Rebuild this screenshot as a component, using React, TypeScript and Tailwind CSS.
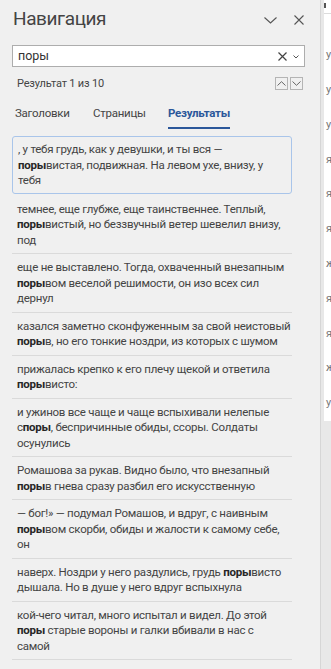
import React from "react";

type Item = { lines: React.ReactNode[]; selected?: boolean };

const B = ({ children }: { children: React.ReactNode }) => (
  <span className="font-bold text-[#262626]">{children}</span>
);

const items: Item[] = [
  {
    selected: true,
    lines: [
      <>, у тебя грудь, как у девушки, и ты вся —</>,
      <>
        <B>поры</B>вистая, подвижная. На левом ухе, внизу, у
      </>,
      <>тебя</>,
    ],
  },
  {
    lines: [
      <>темнее, еще глубже, еще таинственнее. Теплый,</>,
      <>
        <B>поры</B>вистый, но беззвучный ветер шевелил внизу,
      </>,
      <>под</>,
    ],
  },
  {
    lines: [
      <>еще не выставлено. Тогда, охваченный внезапным</>,
      <>
        <B>поры</B>вом веселой решимости, он изо всех сил
      </>,
      <>дернул</>,
    ],
  },
  {
    lines: [
      <>казался заметно сконфуженным за свой неистовый</>,
      <>
        <B>поры</B>в, но его тонкие ноздри, из которых с шумом
      </>,
    ],
  },
  {
    lines: [
      <>прижалась крепко к его плечу щекой и ответила</>,
      <>
        <B>поры</B>висто:
      </>,
    ],
  },
  {
    lines: [
      <>и ужинов все чаще и чаще вспыхивали нелепые</>,
      <>
        с<B>поры</B>, беспричинные обиды, ссоры. Солдаты
      </>,
      <>осунулись</>,
    ],
  },
  {
    lines: [
      <>Ромашова за рукав. Видно было, что внезапный</>,
      <>
        <B>поры</B>в гнева сразу разбил его искусственную
      </>,
    ],
  },
  {
    lines: [
      <>— бог!» — подумал Ромашов, и вдруг, с наивным</>,
      <>
        <B>поры</B>вом скорби, обиды и жалости к самому себе,
      </>,
      <>он</>,
    ],
  },
  {
    lines: [
      <>
        наверх. Ноздри у него раздулись, грудь <B>поры</B>висто
      </>,
      <>дышала. Но в душе у него вдруг вспыхнула</>,
    ],
  },
  {
    lines: [
      <>кой-чего читал, много испытал и видел. До этой</>,
      <>
        <B>поры</B> старые вороны и галки вбивали в нас с
      </>,
      <>самой</>,
    ],
  },
];

const pageGlyphs = ["у", "у", "у", "я", "я", "я", "ж", "я", "я", "ж", "у"];

export default function App() {
  return (
    <div
      className="w-[331px] h-[669px] flex bg-[#f0f0f0] overflow-hidden text-[#444]"
      style={{ fontFamily: 'Roboto, "Open Sans", sans-serif' }}
    >
      {/* Navigation panel */}
      <div className="w-[321px] shrink-0 flex flex-col border-r border-[#d6d6d6]">
        {/* Header */}
        <div className="mt-[6px] h-[26px] flex items-center pl-[13px] pr-[16px]">
          <div className="text-[19px] tracking-[-0.4px] leading-[26px] text-[#444] flex-1">Навигация</div>
          <svg width="13" height="7" viewBox="0 0 13 7" className="mr-[17px] mt-[2px]">
            <path d="M0.5 0.5 L6.5 6 L12.5 0.5" fill="none" stroke="#555" strokeWidth="1.1" />
          </svg>
          <svg width="10" height="10" viewBox="0 0 10 10" className="mt-[2px]">
            <path d="M0.5 0.5 L9.5 9.5 M9.5 0.5 L0.5 9.5" fill="none" stroke="#555" strokeWidth="1.1" />
          </svg>
        </div>

        {/* Search box */}
        <div className="mt-[13px] ml-[12px] w-[293px] h-[22px] border border-[#adadad] bg-white flex items-center pl-[5px] pr-[3px]">
          <div className="flex-1 text-[12.5px] leading-[20px] text-[#333]">поры</div>
          <svg width="9" height="9" viewBox="0 0 9 9" className="mr-[6px]">
            <path d="M0.5 0.5 L8.5 8.5 M8.5 0.5 L0.5 8.5" fill="none" stroke="#444" strokeWidth="1.2" />
          </svg>
          <svg width="6" height="4" viewBox="0 0 6 4" className="mr-[2px] mt-[1px]">
            <path d="M0.5 0.5 L3 3 L5.5 0.5" fill="none" stroke="#555" strokeWidth="1" />
          </svg>
        </div>

        {/* Result count */}
        <div className="mt-[10px] h-[13px] flex items-center pl-[17px] pr-[17px]">
          <div className="flex-1 text-[11px] tracking-[-0.2px] leading-[13px] text-[#444]">Результат 1 из 10</div>
          <div className="w-[13px] h-[13px] border border-[#b4b4b4] flex items-center justify-center mr-[2px]">
            <svg width="9" height="5" viewBox="0 0 9 5">
              <path d="M0.5 4.5 L4.5 0.7 L8.5 4.5" fill="none" stroke="#666" strokeWidth="1" />
            </svg>
          </div>
          <div className="w-[13px] h-[13px] border border-[#b4b4b4] flex items-center justify-center">
            <svg width="9" height="5" viewBox="0 0 9 5">
              <path d="M0.5 0.5 L4.5 4.3 L8.5 0.5" fill="none" stroke="#666" strokeWidth="1" />
            </svg>
          </div>
        </div>

        {/* Tabs */}
        <div className="mt-[10px] h-[29px] flex pl-[15px] text-[11.5px] tracking-[-0.25px]">
          <div className="w-[78px] h-[29px] flex items-center pb-[2px] text-[#444]">Заголовки</div>
          <div className="w-[75px] h-[29px] flex items-center pb-[2px] text-[#444]">Страницы</div>
          <div className="h-[29px] flex items-center border-b-2 border-[#2b579a] font-bold text-[#2b579a]">
            Результаты
          </div>
        </div>

        {/* Results list */}
        <div className="mt-[7px] ml-[12px] w-[280px] flex flex-col text-[11.5px] tracking-[-0.25px] leading-[15.5px] text-[#444]">
          {items.map((it, i) =>
            it.selected ? (
              <div
                key={i}
                className="border border-[#a9c5ea] rounded-[3px] px-[5px] pt-[5px] pb-[4px] mb-[2px]"
              >
                {it.lines.map((l, j) => (
                  <div key={j} className="whitespace-nowrap">
                    {l}
                  </div>
                ))}
              </div>
            ) : (
              <div key={i} className="border-b border-[#dadada] px-[5px] pt-[6px] pb-[5px]">
                {it.lines.map((l, j) => (
                  <div key={j} className="whitespace-nowrap">
                    {l}
                  </div>
                ))}
              </div>
            )
          )}
        </div>
      </div>

      {/* Document edge */}
      <div className="flex-1 flex flex-col bg-[#e8e8e8]">
        <div className="ml-[3px] h-[421px] bg-white overflow-hidden flex flex-col">
          <div className="h-[17px] border-b border-[#dcdcdc] pt-[3px]">
            <div className="w-[2px] h-[5px] bg-[#555]" />
          </div>
          <div className="pt-[24px] pl-[2px] flex flex-col text-[11px] leading-[34.8px] text-[#777]">
            {pageGlyphs.map((g, i) => (
              <div key={i}>{g}</div>
            ))}
          </div>
        </div>
      </div>
    </div>
  );
}
